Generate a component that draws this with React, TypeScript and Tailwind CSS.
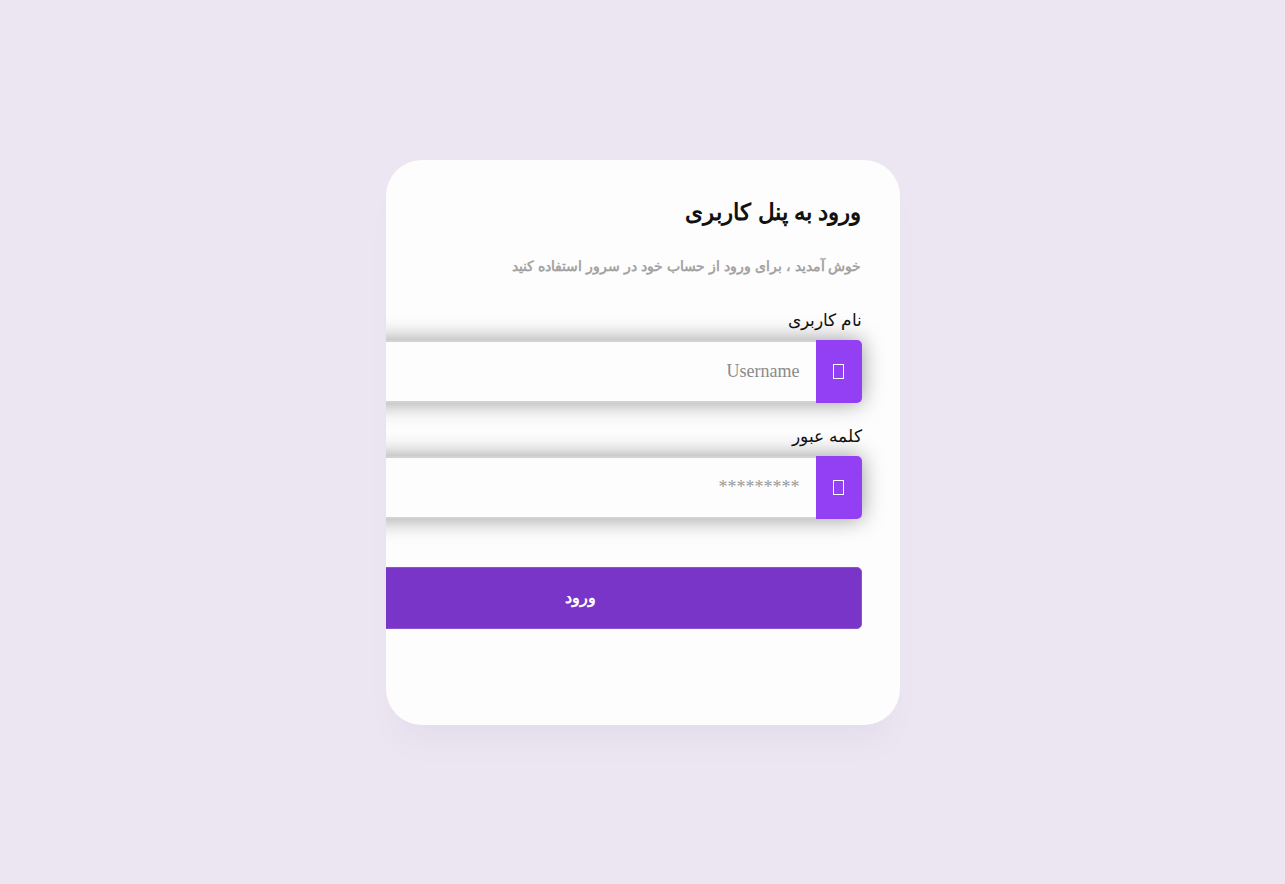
export default function App() {
  return (
    <div className="min-h-screen w-full bg-[#ece6f2] flex items-center justify-center" dir="rtl">
      <div className="w-[514px] h-[565px] bg-[#fdfdfd] rounded-[36px] overflow-hidden px-[38px] pt-[34px] shadow-[0_26px_30px_-10px_rgba(120,80,160,0.06)]">
        <h1 className="text-[23px] leading-[36px] font-bold text-[#111] font-['Liberation_Sans',sans-serif]">
          ورود به پنل کاربری
        </h1>
        <p className="mt-[25px] text-[14.2px] leading-[22px] font-bold text-[#a3a3a3] font-['Liberation_Sans',sans-serif]">
          خوش آمدید ، برای ورود از حساب خود در سرور استفاده کنید
        </p>

        <div className="mt-[33px]">
          <label className="block text-[17px] leading-[22px] text-[#111] font-['Liberation_Serif',serif]">نام کاربری</label>
          <div className="mt-[8px] w-[562px] h-[63px] flex shadow-[0_0_22px_rgba(0,0,0,0.4)] rounded-[5px]">
            <div className="w-[46px] h-full bg-[#9340f5] rounded-r-[5px] flex items-center justify-center">
              <span className="w-[11px] h-[15px] border border-white" />
            </div>
            <input
              placeholder="Username"
              className="flex-1 h-full bg-[#fdfdfd] border-y-2 border-[#d0d2d6] px-[16px] text-[18px] font-['Liberation_Serif',serif] placeholder:text-[#8a8a8a] outline-none"
            />
          </div>
        </div>

        <div className="mt-[23px]">
          <label className="block text-[17px] leading-[22px] text-[#111] font-['Liberation_Serif',serif]">کلمه عبور</label>
          <div className="mt-[8px] w-[562px] h-[63px] flex shadow-[0_0_22px_rgba(0,0,0,0.4)] rounded-[5px]">
            <div className="w-[46px] h-full bg-[#9340f5] rounded-r-[5px] flex items-center justify-center">
              <span className="w-[11px] h-[15px] border border-white" />
            </div>
            <input
              type="password"
              placeholder="*********"
              className="flex-1 h-full bg-[#fdfdfd] border-y-2 border-[#d0d2d6] px-[16px] text-[18px] font-['Liberation_Serif',serif] placeholder:text-[#9a9a9a] outline-none"
            />
          </div>
        </div>

        <button className="mt-[48px] w-[562px] h-[62px] bg-[#7835c8] border border-[#8a55c8] rounded-[5px] text-white text-[16px] font-bold font-['Liberation_Sans',sans-serif]">
          ورود
        </button>
      </div>
    </div>
  )
}
